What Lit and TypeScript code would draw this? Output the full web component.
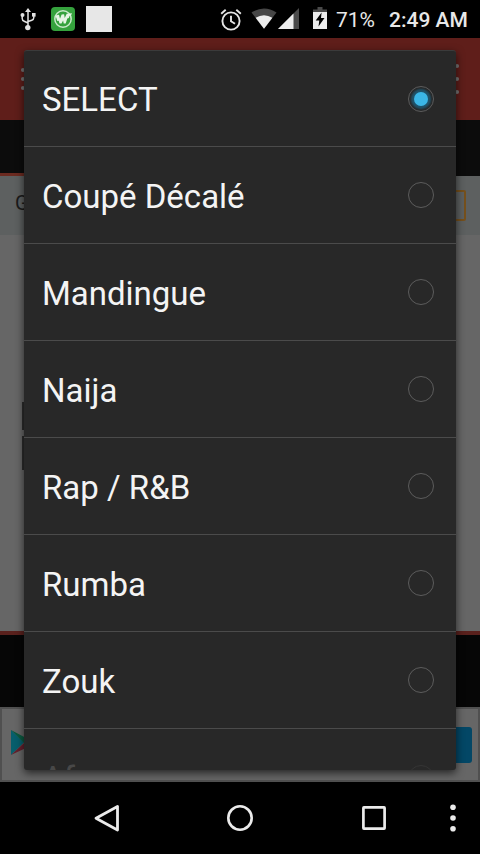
import { LitElement, html, css, svg } from "lit";
import { customElement, state } from "lit/decorators.js";
import { classMap } from "lit/directives/class-map.js";

@customElement("status-bar")
class StatusBar extends LitElement {
  static styles = css`
    :host { display: flex; height: 38px; background: #000; color: #e8e8e8; align-items: center; font: 21px Roboto, sans-serif; }
    svg { display: block; flex: none; }
    .usb { margin-left: 20px; }
    .app { margin-left: 15px; }
    .blank { margin-left: 11px; width: 26px; height: 26px; background: #e7e7e7; }
    .alarm { margin-left: auto; }
    .wifi { margin-left: 9px; }
    .signal { margin-left: 0; }
    .battery { margin-left: 14px; }
    .pct { margin-left: 9px; width: 41px; white-space: nowrap; padding-top: 2px; }
    .time { margin-left: 12px; width: 80px; font-weight: 500; white-space: nowrap; margin-right: 11px; padding-top: 2px; }
  `;
  render() {
    return html`
      <svg class="usb" width="16" height="24" viewBox="0 0 16 24">
        <g fill="none" stroke="#e2e2e2" stroke-width="1.5"><path d="M8 4V20M2.2 8v3.5q0 2 2 2.7L8 16M13.8 8v2.5q0 2-2 2.7L8 14.5" /></g>
        <g fill="#e2e2e2"><path d="M8 1l3 4H5z" /><circle cx="7.8" cy="20.6" r="2.7" /><circle cx="2.5" cy="8" r="2" /><path d="M12 6h3.6v3.6H12z" /></g>
      </svg>
      <svg class="app" width="24" height="24" viewBox="0 0 24 24">
        <rect width="24" height="24" rx="4" fill="#35a23d" />
        <circle cx="12" cy="12" r="8.2" fill="none" stroke="#c9e9ca" stroke-width="1.5" />
        <path d="M4.5 8.5l3.5-.8 1 4 1.6-4.2 2.5-.3.6 3.8 2-4.2 5.3-.6-1 2.4-1.4.2-.8 2.2-1.5.4-1.6 5h-2l-.6-3-1.6 3h-2l-.8-2.6-1.4.2z" fill="#e6f4e5" />
      </svg>
      <div class="blank"></div>
      <svg class="alarm" width="22" height="24" viewBox="0 0 22 24">
        <g fill="none" stroke="#e5e5e5" stroke-width="1.9"><circle cx="11" cy="14" r="8.6" /><path d="M11 8.7v5.6l4 2.5M1.2 6.7l4.5-4M20.8 6.7l-4.5-4" /></g>
      </svg>
      <svg class="wifi" width="26" height="22" viewBox="0 0 27 22">
        <path d="M.5 4.3Q13.5-4 26.5 4.3L13.5 21z" fill="#464646" /><path d="M4.8 9.8Q13.5 4.4 22.2 9.8L13.5 21z" fill="#ededed" />
      </svg>
      <svg class="signal" width="22" height="22" viewBox="0 0 22 22">
        <path d="M22 0v21H1z" fill="#4a4a4a" /><path d="M16.5 5.5V21H1z" fill="#ededed" />
      </svg>
      <svg class="battery" width="14" height="24" viewBox="0 0 14 24">
        <path d="M4.5 0h5v2.5H14V8H0V2.5h4.5z" fill="#4a4a4a" /><path d="M0 5h14v17H0z" fill="#ededed" />
        <path d="M8.6 5.5L2.7 13.6h3.6l-.8 6 6-8.5H8z" fill="#000" />
      </svg>
      <span class="pct">71%</span><span class="time">2:49 AM</span>
    `;
  }
}

@customElement("page-behind")
class PageBehind extends LitElement {
  static styles = css`
    :host { display: flex; flex-direction: column; height: 744px; background: #666; }
    .bar { height: 82px; flex: none; background: #5f1e1a; display: flex; align-items: center; justify-content: space-between; padding: 0 21px; box-sizing: border-box; }
    .dots { display: grid; gap: 5px; }
    .dots i { width: 4px; height: 4px; border-radius: 2px; background: #777; }
    .more { gap: 9px; }
    .tabs { display: flow-root; height: 56px; flex: none; background: #0c0c0c; box-sizing: border-box; }
    .tabs div { width: 150px; height: 3px; margin-top: 53px; background: #6b2a20; }
    .filter { height: 59px; flex: none; background: #5d6060; display: flex; justify-content: space-between; align-items: center; padding: 0 14px 0 15px; font: 20px Roboto, sans-serif; color: #1b1b1b; }
    .filter span { padding-bottom: 5px; }
    .box { width: 90px; height: 27px; border: 2px solid #76501c; border-radius: 2px; }
    .list { flex: 1; display: flex; align-items: center; padding: 5px 22px 0; }
    .thumb { width: 70px; height: 68px; display: flex; flex-direction: column; gap: 6px; }
    .thumb i { flex: 1; background: #2d2d2d; }
    .thumb i + i { flex: 1.2; }
    .rule { height: 4px; flex: none; background: #5a211d; }
    .gap { height: 72px; flex: none; background: #060606; }
    .ad { height: 75px; flex: none; box-sizing: border-box; border: 2px solid #505050; background: #666; display: flex; align-items: center; justify-content: space-between; padding: 0 6px 0 8px; }
    .ad svg { margin-bottom: 3px; }
    .install { width: 80px; height: 36px; border-radius: 3px; background: #034766; }
  `;
  render() {
    return html`
      <div class="bar"><div class="dots"><i></i><i></i><i></i></div><div class="dots more"><i></i><i></i><i></i></div></div>
      <div class="tabs"><div></div></div>
      <div class="filter"><span>G</span><div class="box"></div></div>
      <div class="list"><div class="thumb"><i></i><i></i></div></div>
      <div class="rule"></div><div class="gap"></div>
      <div class="ad">
        <svg width="26" height="28" viewBox="0 0 26 28"><path d="M1 1v25L14 13.5z" fill="#075e6c" /><path d="M1 1l17 9-4 4z" fill="#0b5a40" /><path d="M1 26l17-8-4-4z" fill="#64202d" /><path d="M18 10l7 4-7 4-4-4z" fill="#6b5a15" /></svg>
        <div class="install"></div>
      </div>
    `;
  }
}

@customElement("genre-dialog")
class GenreDialog extends LitElement {
  @state() private selected = 0;
  private genres = ["SELECT", "Coupé Décalé", "Mandingue", "Naija", "Rap / R&B", "Rumba", "Zouk", "Afro"];
  static styles = css`
    :host { display: block; box-sizing: border-box; background: #282828; border-top: 1px solid #3b3b3b; border-radius: 3px; overflow: hidden; box-shadow: 0 3px 9px rgba(0, 0, 0, .65); font: 33px Roboto, sans-serif; color: #f4f4f4; }
    .row { height: 97px; box-sizing: border-box; border-bottom: 1px solid #4b4b4b; display: flex; align-items: center; justify-content: space-between; padding: 0 22px 0 18px; }
    .row span { padding-top: 2px; white-space: pre; }
    .row:first-child { height: 96px; }
    .radio { width: 26px; height: 26px; box-sizing: border-box; border: 1.5px solid #5c5c5c; border-width: 1.5px; border-radius: 50%; display: grid; place-items: center; }
    .on::after { content: ""; width: 14px; height: 14px; border-radius: 50%; background: #3bb6e6; box-shadow: 0 0 2px 3px #20536a; }
    .row:last-child { color: #484848; border: 0; }
    .row:last-child .radio { border-color: #353535; }
  `;
  render() {
    return this.genres.map((g, i) => html`<div class="row" @click=${() => (this.selected = i)}>
      <span>${g}</span><div class=${classMap({ radio: true, on: i === this.selected })}></div></div>`);
  }
}

@customElement("nav-bar")
class NavBar extends LitElement {
  static styles = css`
    :host { display: flex; height: 72px; background: #000; align-items: center; }
    svg { display: block; }
    .back { margin-left: 93px; }
    .home { margin-left: 106px; }
    .recent { margin-left: 108px; }
    .menu { margin-left: 61px; }
  `;
  render() {
    const triangle = svg`<path d="M24.5 2.5V26L3 14.2z" fill="none" stroke="#ebebeb" stroke-width="2.8" stroke-linejoin="round" />`;
    return html`
      <svg class="back" width="28" height="28" viewBox="0 0 28 28">${triangle}</svg>
      <svg class="home" width="26" height="26" viewBox="0 0 26 26"><circle cx="13" cy="13" r="11.7" fill="none" stroke="#ebebeb" stroke-width="2.6" /></svg>
      <svg class="recent" width="26" height="26" viewBox="0 0 26 26"><rect x="2.4" y="2.4" width="21.2" height="21.2" rx=".5" fill="none" stroke="#ebebeb" stroke-width="2.7" /></svg>
      <svg class="menu" width="10" height="28" viewBox="0 0 10 28"><g fill="#ebebeb"><circle cx="5" cy="3.2" r="2.8" /><circle cx="5" cy="14" r="2.8" /><circle cx="5" cy="24.8" r="2.8" /></g></svg>
    `;
  }
}

@customElement("app-root")
class AppRoot extends LitElement {
  static styles = css`
    :host { display: flex; flex-direction: column; position: relative; width: 480px; height: 854px; background: #000; overflow: hidden; }
    genre-dialog { position: absolute; left: 24px; top: 50px; width: 432px; height: 720px; }
  `;
  render() {
    return html`<status-bar></status-bar><page-behind></page-behind><nav-bar></nav-bar><genre-dialog></genre-dialog>`;
  }
}
